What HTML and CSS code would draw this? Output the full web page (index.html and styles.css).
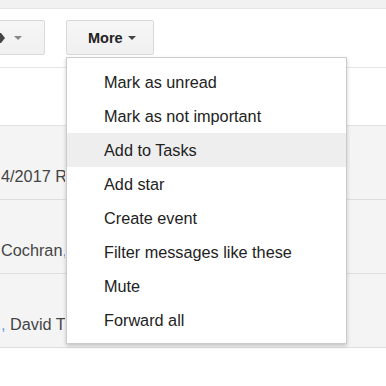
FILE: index.html
```html
<!DOCTYPE html>
<html>
<head>
<meta charset="utf-8">
<link rel="stylesheet" href="styles.css">
</head>
<body>
<div class="page">
  <div class="topbar"></div>
  <div class="toolbar">
    <div class="btn btn-label">
      <svg class="tag" width="14" height="12" viewBox="0 0 14 12"><path d="M0 1h9l4 5-4 5H0z" fill="#444"/></svg>
      <span class="caret caret-gray"></span>
    </div>
    <div class="btn btn-more">
      <span class="more-text">More</span>
      <span class="caret"></span>
    </div>
  </div>
  <div class="info"></div>
  <div class="row"><span class="row-text">4/2017 R</span></div>
  <div class="row"><span class="row-text">Cochran<span class="blue">,</span></span></div>
  <div class="row"><span class="row-text"><span class="blue">,</span> David Th</span></div>

  <div class="menu">
    <div class="item">Mark as unread</div>
    <div class="item">Mark as not important</div>
    <div class="item active">Add to Tasks</div>
    <div class="item">Add star</div>
    <div class="item">Create event</div>
    <div class="item">Filter messages like these</div>
    <div class="item">Mute</div>
    <div class="item">Forward all</div>
  </div>
</div>
</body>
</html>
```

FILE: styles.css
```css
html, body {
  margin: 0;
  padding: 0;
  background: #fff;
}
body {
  font-family: "Liberation Sans", Arial, sans-serif;
  width: 386px;
  height: 386px;
  overflow: hidden;
}
.page {
  position: relative;
  width: 386px;
  height: 386px;
}
.topbar {
  height: 8px;
  background: #f1f1f1;
  border-bottom: 1px solid #e5e5e5;
}
.toolbar {
  height: 59px;
  box-sizing: border-box;
  padding-top: 11px;
  display: flex;
  align-items: flex-start;
  gap: 21px;
  border-bottom: 1px solid #e5e5e5;
}
.btn {
  height: 35px;
  box-sizing: border-box;
  border: 1px solid #d9d9d9;
  border-radius: 2px;
  background: linear-gradient(#f6f6f6, #f0f0f0);
  display: flex;
  align-items: center;
}
.btn-label {
  width: 70px;
  margin-left: -25px;
  padding-left: 16px;
}
.tag {
  margin-right: 8px;
}
.btn-more {
  width: 88px;
  padding-left: 21px;
}
.more-text {
  font-weight: bold;
  font-size: 14.5px;
  color: #222;
  margin-right: 5px;
}
.caret {
  width: 0;
  height: 0;
  border-left: 4px solid transparent;
  border-right: 4px solid transparent;
  border-top: 4px solid #444;
}
.caret-gray {
  border-top-color: #888;
}
.info {
  height: 57px;
  border-bottom: 1px solid #e2e2e2;
}
.row {
  height: 74px;
  box-sizing: border-box;
  padding-top: 41px;
  padding-left: 1px;
  background: #f4f4f4;
  border-bottom: 1px solid #dedede;
}
.row:first-of-type {
  height: 75px;
}
.row-text {
  display: block;
  width: 64px;
  overflow: hidden;
  white-space: nowrap;
  font-size: 16.25px;
  color: #444;
}
.blue {
  color: #5aa0e0;
}
.menu {
  position: absolute;
  left: 66px;
  top: 57px;
  width: 281px;
  box-sizing: border-box;
  padding: 7px 0 6px;
  background: #fff;
  border: 1px solid rgba(0, 0, 0, 0.2);
  box-shadow: 0 2px 4px rgba(0, 0, 0, 0.2);
}
.item {
  height: 34px;
  line-height: 34px;
  padding-left: 37px;
  font-size: 16.25px;
  color: #222;
  white-space: nowrap;
}
.item.active {
  background: #eeeeee;
}
```
